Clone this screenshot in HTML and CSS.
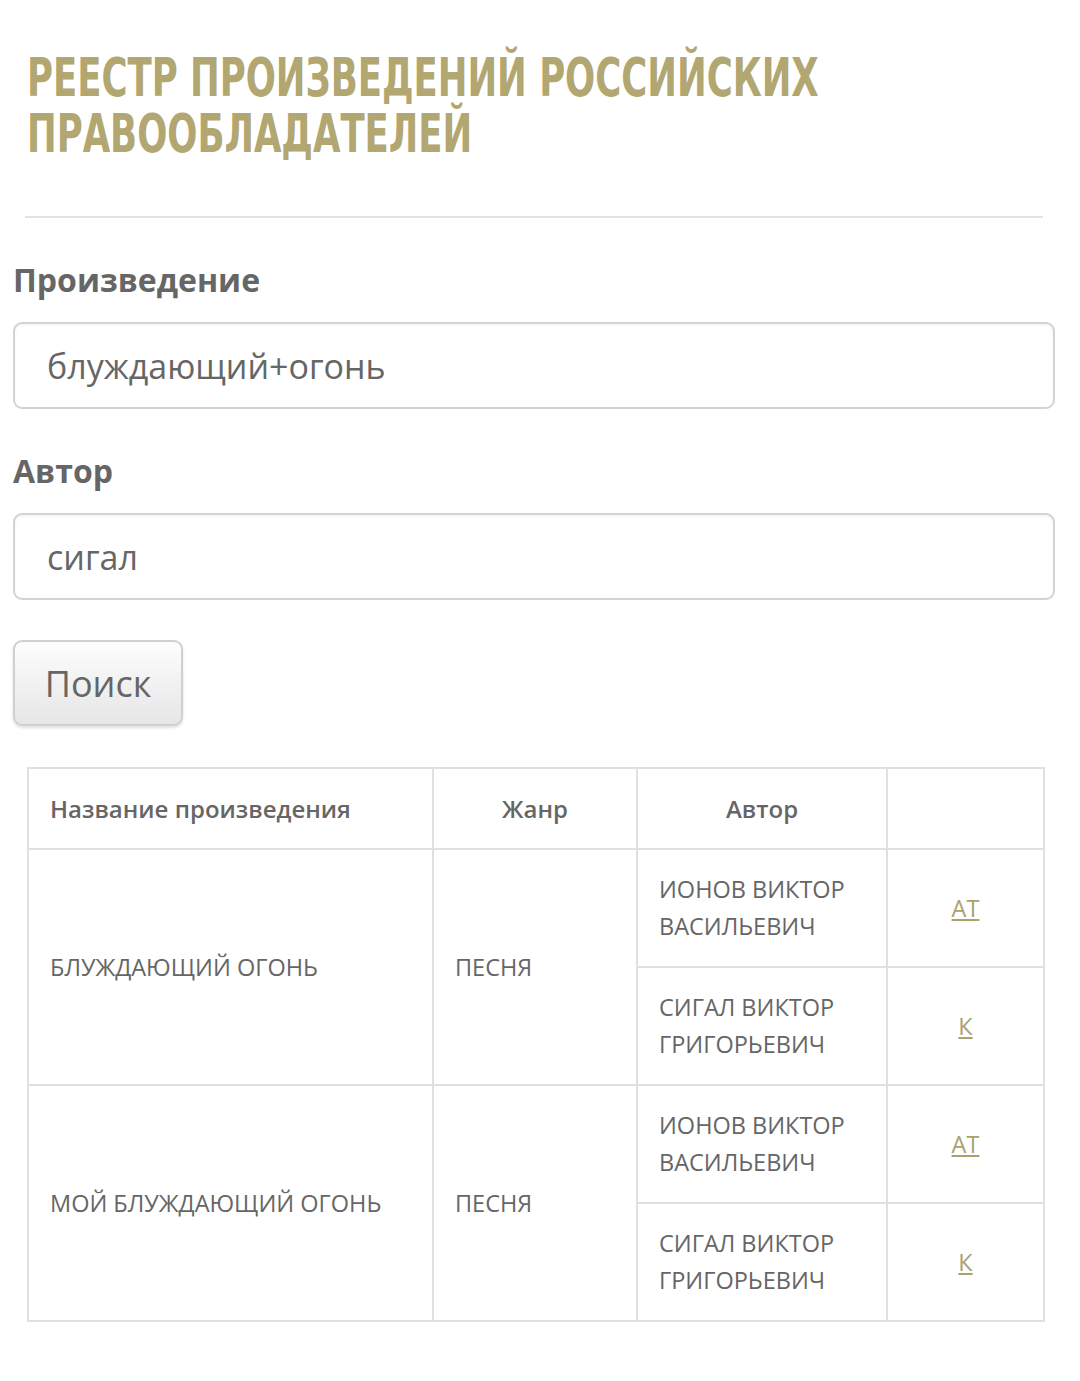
FILE: index.html
```html
<!DOCTYPE html>
<html lang="ru">
<head>
  <meta charset="UTF-8">
  <meta name="viewport" content="width=device-width, initial-scale=1.0">
  <title>Реестр произведений российских правообладателей</title>
  <link rel="stylesheet" href="styles.css">
</head>
<body>
  <div class="page">
    <h1 class="title"><span class="title-text">РЕЕСТР ПРОИЗВЕДЕНИЙ РОССИЙСКИХ<br>ПРАВООБЛАДАТЕЛЕЙ</span></h1>
    <hr class="divider">

    <form class="search">
      <label class="field-label" for="work">Произведение</label>
      <input class="field" id="work" type="text" value="блуждающий+огонь">

      <label class="field-label" for="author">Автор</label>
      <input class="field" id="author" type="text" value="сигал">

      <button class="search-btn" type="button">Поиск</button>
    </form>

    <table class="results">
      <colgroup>
        <col class="col-name">
        <col class="col-genre">
        <col class="col-author">
        <col class="col-link">
      </colgroup>
      <thead>
        <tr>
          <th class="left">Название произведения</th>
          <th>Жанр</th>
          <th>Автор</th>
          <th></th>
        </tr>
      </thead>
      <tbody>
        <tr>
          <td rowspan="2">БЛУЖДАЮЩИЙ ОГОНЬ</td>
          <td rowspan="2">ПЕСНЯ</td>
          <td>ИОНОВ ВИКТОР ВАСИЛЬЕВИЧ</td>
          <td class="link-cell"><a href="#">АТ</a></td>
        </tr>
        <tr>
          <td>СИГАЛ ВИКТОР ГРИГОРЬЕВИЧ</td>
          <td class="link-cell"><a href="#">К</a></td>
        </tr>
        <tr>
          <td rowspan="2">МОЙ БЛУЖДАЮЩИЙ ОГОНЬ</td>
          <td rowspan="2">ПЕСНЯ</td>
          <td>ИОНОВ ВИКТОР ВАСИЛЬЕВИЧ</td>
          <td class="link-cell"><a href="#">АТ</a></td>
        </tr>
        <tr>
          <td>СИГАЛ ВИКТОР ГРИГОРЬЕВИЧ</td>
          <td class="link-cell"><a href="#">К</a></td>
        </tr>
      </tbody>
    </table>
  </div>
</body>
</html>
```

FILE: styles.css
```css
body {
  margin: 0;
  background: #fff;
  color: #666;
  font-family: "Open Sans", "Noto Sans", sans-serif;
}
.page {
  padding: 0 25px 60px 13px;
}
.title {
  margin: 0 0 0 14px;
  padding-top: 50px;
  font-family: "DejaVu Sans Condensed", "Liberation Sans", sans-serif;
  font-size: 54px;
  line-height: 56px;
  font-weight: bold;
  color: #b2a671;
  white-space: nowrap;
}
/* no condensed display face offline, so squeeze the bold one */
.title-text {
  display: inline-block;
  transform: scaleX(0.73);
  transform-origin: left center;
}
.divider {
  margin: 54px 12px 0 12px;
  border: none;
  border-top: 2px solid #e2e2e2;
}
.search {
  display: flex;
  flex-direction: column;
  align-items: flex-start;
}
.field-label {
  margin-top: 40px;
  font-size: 32px;
  font-weight: bold;
  line-height: 44px;
  color: #666;
}
.field {
  box-sizing: border-box;
  width: 100%;
  height: 87px;
  margin-top: 20px;
  padding: 0 32px;
  border: 2px solid #d3d3d3;
  border-radius: 9px;
  box-shadow: inset 0 1px 3px rgba(0, 0, 0, 0.06);
  font-family: inherit;
  font-size: 34px;
  color: #666;
  background: #fff;
}
.field + .field-label {
  margin-top: 40px;
}
.search-btn {
  margin-top: 40px;
  width: 170px;
  height: 86px;
  border: 2px solid #d0d0d0;
  border-radius: 9px;
  background: linear-gradient(#fdfdfd, #e6e6e6);
  box-shadow: 0 2px 3px rgba(0, 0, 0, 0.12);
  font-family: inherit;
  font-size: 36px;
  color: #666;
}
.results {
  margin: 41px 12px 0 14px;
  width: 1016px;
  border-collapse: collapse;
  table-layout: fixed;
  font-size: 23.5px;
  line-height: 37px;
}
.col-name { width: 405px; }
.col-genre { width: 204px; }
.col-author { width: 250px; }
.col-link { width: 157px; }
.results th,
.results td {
  border: 2px solid #e0e0e0;
  padding: 21px 21px;
  text-align: left;
  vertical-align: middle;
  color: #666;
}
.results th {
  height: 79px;
  padding-top: 0;
  padding-bottom: 0;
  text-align: center;
  font-weight: 600;
  font-size: 24px;
}
.results th.left {
  text-align: left;
}
.results td.link-cell {
  text-align: center;
}
.results a {
  color: #a9a26e;
}
```
